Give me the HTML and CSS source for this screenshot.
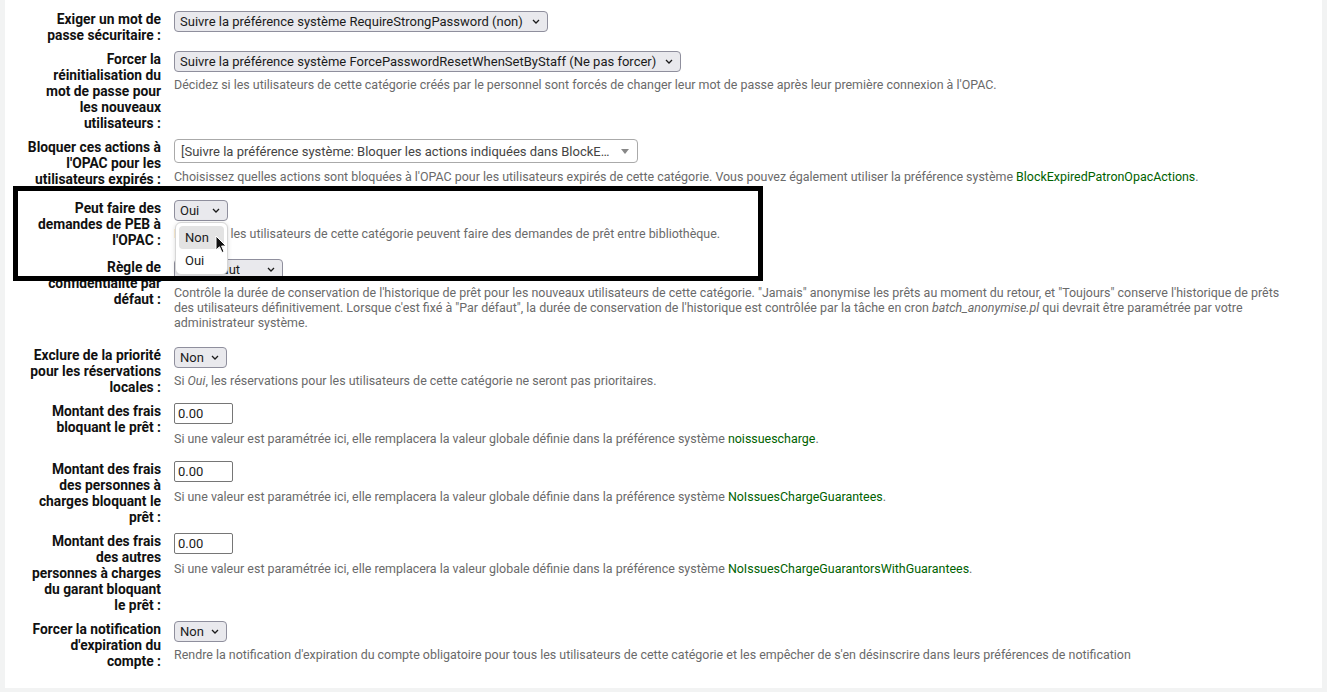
FILE: index.html
```html
<!DOCTYPE html>
<html lang="fr">
<head>
<meta charset="utf-8">
<title>Catégorie d'utilisateurs</title>
<link rel="stylesheet" href="styles.css">
</head>
<body>
<div class="panel">
  <ol class="rows">
    <li class="row">
      <label class="lbl">Exiger un mot de<br>passe sécuritaire :</label>
      <div class="field">
        <span class="sel w-374"><span class="sel-text">Suivre la préférence système RequireStrongPassword (non)</span><svg class="chev" width="8" height="5" viewBox="0 0 8 5"><path d="M1 1 L4 4 L7 1" fill="none" stroke="#1b1b1b" stroke-width="1.3"/></svg></span>
      </div>
    </li>
    <li class="row">
      <label class="lbl">Forcer la<br>réinitialisation du<br>mot de passe pour<br>les nouveaux<br>utilisateurs :</label>
      <div class="field">
        <span class="sel w-507"><span class="sel-text">Suivre la préférence système ForcePasswordResetWhenSetByStaff (Ne pas forcer)</span><svg class="chev" width="8" height="5" viewBox="0 0 8 5"><path d="M1 1 L4 4 L7 1" fill="none" stroke="#1b1b1b" stroke-width="1.3"/></svg></span>
        <div class="hint">Décidez si les utilisateurs de cette catégorie créés par le personnel sont forcés de changer leur mot de passe après leur première connexion à l'OPAC.</div>
      </div>
    </li>
    <li class="row row-s2">
      <label class="lbl">Bloquer ces actions à<br>l'OPAC pour les<br>utilisateurs expirés :</label>
      <div class="field">
        <span class="s2"><span class="s2-text">[Suivre la préférence système: Bloquer les actions indiquées dans BlockE…</span><span class="s2-arrow"></span></span>
        <div class="hint hint-s2">Choisissez quelles actions sont bloquées à l'OPAC pour les utilisateurs expirés de cette catégorie. Vous pouvez également utiliser la préférence système <a class="lnk" href="#">BlockExpiredPatronOpacActions</a>.</div>
      </div>
    </li>
    <li class="row row-peb">
      <label class="lbl">Peut faire des<br>demandes de PEB à<br>l'OPAC :</label>
      <div class="field">
        <span class="sel w-54"><span class="sel-text">Oui</span><svg class="chev" width="8" height="5" viewBox="0 0 8 5"><path d="M1 1 L4 4 L7 1" fill="none" stroke="#1b1b1b" stroke-width="1.3"/></svg></span>
        <div class="hint">Indique si les utilisateurs de cette catégorie peuvent faire des demandes de prêt entre bibliothèque.</div>
      </div>
    </li>
    <li class="row row-priv">
      <label class="lbl">Règle de<br>confidentialité par<br>défaut :</label>
      <div class="field">
        <span class="sel w-109"><span class="sel-text">Par défaut</span><svg class="chev" width="8" height="5" viewBox="0 0 8 5"><path d="M1 1 L4 4 L7 1" fill="none" stroke="#1b1b1b" stroke-width="1.3"/></svg></span>
        <div class="hint">Contrôle la durée de conservation de l'historique de prêt pour les nouveaux utilisateurs de cette catégorie. "Jamais" anonymise les prêts au moment du retour, et "Toujours" conserve l'historique de prêts<br>des utilisateurs définitivement. Lorsque c'est fixé à "Par défaut", la durée de conservation de l'historique est contrôlée par la tâche en cron <i>batch_anonymise.pl</i> qui devrait être paramétrée par votre<br>administrateur système.</div>
      </div>
    </li>
    <li class="row">
      <label class="lbl">Exclure de la priorité<br>pour les réservations<br>locales :</label>
      <div class="field">
        <span class="sel w-53"><span class="sel-text">Non</span><svg class="chev" width="8" height="5" viewBox="0 0 8 5"><path d="M1 1 L4 4 L7 1" fill="none" stroke="#1b1b1b" stroke-width="1.3"/></svg></span>
        <div class="hint">Si <i>Oui</i>, les réservations pour les utilisateurs de cette catégorie ne seront pas prioritaires.</div>
      </div>
    </li>
    <li class="row">
      <label class="lbl">Montant des frais<br>bloquant le prêt :</label>
      <div class="field">
        <span class="inp">0.00</span>
        <div class="hint hint-inp">Si une valeur est paramétrée ici, elle remplacera la valeur globale définie dans la préférence système <a class="lnk" href="#">noissuescharge</a>.</div>
      </div>
    </li>
    <li class="row">
      <label class="lbl">Montant des frais<br>des personnes à<br>charges bloquant le<br>prêt :</label>
      <div class="field">
        <span class="inp">0.00</span>
        <div class="hint hint-inp">Si une valeur est paramétrée ici, elle remplacera la valeur globale définie dans la préférence système <a class="lnk" href="#">NoIssuesChargeGuarantees</a>.</div>
      </div>
    </li>
    <li class="row">
      <label class="lbl">Montant des frais<br>des autres<br>personnes à charges<br>du garant bloquant<br>le prêt :</label>
      <div class="field">
        <span class="inp">0.00</span>
        <div class="hint hint-inp">Si une valeur est paramétrée ici, elle remplacera la valeur globale définie dans la préférence système <a class="lnk" href="#">NoIssuesChargeGuarantorsWithGuarantees</a>.</div>
      </div>
    </li>
    <li class="row">
      <label class="lbl">Forcer la notification<br>d'expiration du<br>compte :</label>
      <div class="field">
        <span class="sel w-53"><span class="sel-text">Non</span><svg class="chev" width="8" height="5" viewBox="0 0 8 5"><path d="M1 1 L4 4 L7 1" fill="none" stroke="#1b1b1b" stroke-width="1.3"/></svg></span>
        <div class="hint">Rendre la notification d'expiration du compte obligatoire pour tous les utilisateurs de cette catégorie et les empêcher de s'en désinscrire dans leurs préférences de notification</div>
      </div>
    </li>
  </ol>
</div>

<div class="popup">
  <div class="opt opt-hl">Non</div>
  <div class="opt">Oui</div>
</div>
<svg class="cursor" width="12" height="19" viewBox="0 0 12 19"><path d="M1 1 L1 15 L4.5 11.8 L7 17.5 L9 16.6 L6.6 11 L11 11 Z" fill="#111" stroke="#fff" stroke-width="1"/></svg>
<div class="highlight-box"></div>
</body>
</html>
```
FILE: styles.css
```css
html, body {
  margin: 0;
  padding: 0;
}
body {
  background: #f2f3f3;
  font-family: Roboto, "Noto Sans", sans-serif;
  color: #1d1d1d;
  position: relative;
  height: 692px;
  overflow: hidden;
}
.panel {
  margin-left: 5px;
  width: 1317px;
  background: #ffffff;
  padding: 11px 0 11px 0;
  box-sizing: border-box;
}
.rows {
  list-style: none;
  margin: 0;
  padding: 0;
}
.row {
  display: flex;
  align-items: flex-start;
  padding-bottom: 8px;
}
.row-s2 {
  padding-bottom: 9px;
}
.row-peb {
  padding-bottom: 11px;
}
.row-priv {
  padding-bottom: 10px;
}
.lbl {
  flex: none;
  width: 143px;
  margin-left: 13px;
  margin-right: 13px;
  text-align: right;
  font-weight: bold;
  font-size: 13.8px;
  line-height: 16px;
  white-space: nowrap;
  color: #111;
}
.field {
  flex: 1;
  min-width: 0;
}
.sel {
  display: flex;
  align-items: center;
  justify-content: space-between;
  box-sizing: border-box;
  height: 21px;
  border: 1px solid #8f8f9d;
  border-radius: 4px;
  background: #e9e9ed;
  padding: 0 7px 0 5px;
  font-size: 13px;
  color: #1b1b1b;
  overflow: hidden;
  white-space: nowrap;
}
.sel-text {
  overflow: hidden;
}
.chev {
  flex: none;
  margin-left: 6px;
}
.w-374 { width: 374px; }
.w-507 { width: 507px; }
.w-54 { width: 54px; }
.w-53 { width: 53px; }
.w-109 { width: 109px; }
.s2 {
  display: flex;
  align-items: center;
  justify-content: space-between;
  box-sizing: border-box;
  width: 464px;
  height: 24px;
  border: 1px solid #aaaaaa;
  border-radius: 4px;
  background: #fff;
  padding: 0 8px 0 6px;
  font-size: 13px;
  color: #444;
  white-space: nowrap;
  overflow: hidden;
}
.s2-text {
  overflow: hidden;
}
.s2-arrow {
  flex: none;
  width: 0;
  height: 0;
  border-left: 4px solid transparent;
  border-right: 4px solid transparent;
  border-top: 5px solid #888;
  margin-left: 6px;
}
.inp {
  display: block;
  box-sizing: border-box;
  width: 59px;
  height: 21px;
  border: 1px solid #767676;
  border-radius: 2px;
  background: #fff;
  font-size: 13px;
  line-height: 19px;
  padding-left: 3px;
  color: #1b1b1b;
}
.hint {
  font-size: 12.45px;
  line-height: 15px;
  color: #6a6a6a;
  margin-top: 5px;
  margin-bottom: 7px;
  white-space: nowrap;
}
.hint-s2 {
  margin-top: 6px;
}
.hint-inp {
  margin-top: 7px;
}
.lnk {
  color: #006100;
  text-decoration: none;
}
.popup {
  position: absolute;
  left: 175px;
  top: 222px;
  width: 53px;
  height: 53px;
  box-sizing: border-box;
  background: #fff;
  border: 1px solid #d6d6d6;
  border-radius: 6px;
  box-shadow: 0 1px 4px rgba(0,0,0,0.15);
  padding: 3px;
  font-size: 13px;
  color: #1b1b1b;
}
.opt {
  height: 23px;
  line-height: 23px;
  padding-left: 6px;
  border-radius: 4px;
}
.opt-hl {
  background: #e3e3e3;
}
.cursor {
  position: absolute;
  left: 215px;
  top: 235px;
}
.highlight-box {
  position: absolute;
  left: 13px;
  top: 186px;
  width: 750px;
  height: 95px;
  box-sizing: border-box;
  border: 5px solid #000;
}
```
